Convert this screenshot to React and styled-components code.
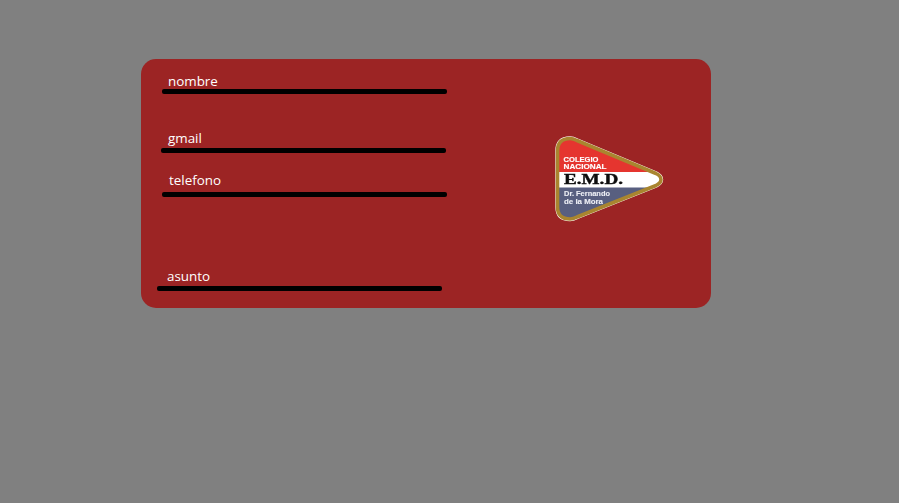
import React from "react";
import styled, { createGlobalStyle } from "styled-components";

const Global = createGlobalStyle`
  html, body { margin: 0; padding: 0; height: 100%; background: #808080; overflow: hidden; }
  #root { height: 100%; }
`;

const Page = styled.div`
  height: 503px;
  padding: 59px 188px 0 141px;
  box-sizing: border-box;
  background: #808080;
  font-family: "Open Sans", sans-serif;
`;

const Card = styled.section`
  width: 570px;
  height: 249px;
  box-sizing: border-box;
  padding: 13px 47px 0 16px;
  display: flex;
  justify-content: space-between;
  align-items: flex-start;
  background: #9c2424;
  border-radius: 15px;
`;

const Form = styled.form`
  display: flex;
  flex-direction: column;
  width: 290px;
`;

const Field = styled.div`
  display: flex;
  flex-direction: column;
  margin-top: ${(p) => p.$top}px;
  margin-left: ${(p) => p.$x}px;
  gap: ${(p) => p.$gap}px;
`;

const Label = styled.label`
  height: 17px;
  line-height: 19px;
  margin-left: ${(p) => p.$indent}px;
  font-size: 13.4px;
  color: #fff;
`;

const Line = styled.div`
  width: 285px;
  height: 5px;
  flex: none;
  border-radius: 2px;
  background: #000;
`;

const Logo = styled.svg`
  width: 109px;
  height: 86px;
  margin-top: 64px;
  flex: none;
  overflow: visible;
  filter: blur(0.3px);
`;

const fields = [
  { name: "nombre", top: 0, x: 5, gap: 0, indent: 6 },
  { name: "gmail", top: 35, x: 4, gap: 2, indent: 7 },
  { name: "telefono", top: 18, x: 5, gap: 4, indent: 7 },
  { name: "asunto", top: 70, x: 0, gap: 2, indent: 10 },
];

const shield =
  "M2.5 15 Q2.5 2.5 15 2.5 Q18 2.5 22 4.5 L101 37.5 Q106 40 106 43.5 Q106 47 101 49.5 L22 81 Q18 83 15 83 Q2.5 83 2.5 71 Z";

export default function App() {
  return (
    <Page>
      <Global />
      <Card>
        <Form>
          {fields.map((f) => (
            <Field key={f.name} $top={f.top} $x={f.x} $gap={f.gap}>
              <Label $indent={f.indent}>{f.name}</Label>
              <Line />
            </Field>
          ))}
        </Form>
        <Logo viewBox="0 0 109 86" role="img" aria-label="Colegio Nacional E.M.D.">
          <defs>
            <clipPath id="shieldClip">
              <path d={shield} />
            </clipPath>
          </defs>
          <path d={shield} fill="#fff" stroke="#fff" strokeWidth="4.4" />
          <g clipPath="url(#shieldClip)">
            <rect x="0" y="0" width="109" height="36" fill="#e5352f" />
            <rect x="0" y="36" width="109" height="15.5" fill="#fff" />
            <rect x="0" y="51.5" width="109" height="35" fill="#585f80" />
          </g>
          <path d={shield} fill="none" stroke="#a9852f" strokeWidth="3.6" />
          <g fontFamily="'Liberation Sans', sans-serif" fontWeight="700" fill="#fff" stroke="#fff" strokeWidth="0.15">
            <text x="8.5" y="25.5" fontSize="7.8" textLength="35" lengthAdjust="spacingAndGlyphs">COLEGIO</text>
            <text x="8.5" y="33.2" fontSize="7.8" textLength="43" lengthAdjust="spacingAndGlyphs">NACIONAL</text>
          </g>
          <text
            x="9"
            y="48"
            fontFamily="'Liberation Serif', serif"
            fontWeight="700"
            fontSize="14"
            fill="#0d0d0d"
            stroke="#0d0d0d"
            strokeWidth="0.4"
            textLength="59"
            lengthAdjust="spacingAndGlyphs"
          >
            E.M.D.
          </text>
          <g fontFamily="'Liberation Sans', sans-serif" fontWeight="700" fill="#eceef4" stroke="#eceef4" strokeWidth="0.12">
            <text x="9" y="60" fontSize="6.8" textLength="46" lengthAdjust="spacingAndGlyphs">Dr. Fernando</text>
            <text x="9" y="67.5" fontSize="6.8" textLength="39" lengthAdjust="spacingAndGlyphs">de la Mora</text>
          </g>
        </Logo>
      </Card>
    </Page>
  );
}
